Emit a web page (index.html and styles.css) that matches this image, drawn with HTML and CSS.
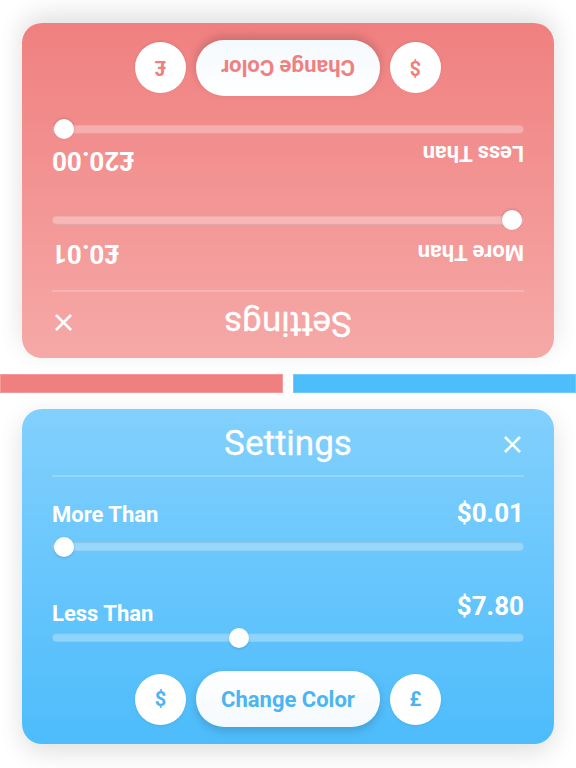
FILE: index.html
```html
<!DOCTYPE html>
<html lang="en">
<head>
<meta charset="utf-8">
<title>Settings</title>
<link rel="stylesheet" href="styles.css">
</head>
<body>
<div class="page">
  <section class="card card-red flipped">
    <div class="header">
      <span></span>
      <h1 class="title">Settings</h1>
      <button class="close" aria-label="Close">
        <svg viewBox="0 0 18 18" width="17" height="17"><path d="M2 2 L16 16 M16 2 L2 16" stroke="#fff" stroke-width="2.8" stroke-linecap="square" fill="none"/></svg>
      </button>
    </div>
    <div class="row row-first">
      <span class="label">More Than</span>
      <span class="value">£0.01</span>
    </div>
    <div class="slider slider-first"><div class="thumb" style="--p:0"></div></div>
    <div class="row row-second">
      <span class="label">Less Than</span>
      <span class="value">£20.00</span>
    </div>
    <div class="slider slider-second"><div class="thumb" style="--p:1"></div></div>
    <div class="actions">
      <button class="round">$</button>
      <button class="pill">Change Color</button>
      <button class="round">£</button>
    </div>
  </section>

  <div class="bars">
    <div class="bar bar-red"></div>
    <div class="bar bar-blue"></div>
  </div>

  <section class="card card-blue">
    <div class="header">
      <span></span>
      <h1 class="title">Settings</h1>
      <button class="close" aria-label="Close">
        <svg viewBox="0 0 18 18" width="17" height="17"><path d="M2 2 L16 16 M16 2 L2 16" stroke="#fff" stroke-width="2.8" stroke-linecap="square" fill="none"/></svg>
      </button>
    </div>
    <div class="row row-first">
      <span class="label">More Than</span>
      <span class="value">$0.01</span>
    </div>
    <div class="slider slider-first"><div class="thumb" style="--p:0"></div></div>
    <div class="row row-second">
      <span class="label">Less Than</span>
      <span class="value">$7.80</span>
    </div>
    <div class="slider slider-second"><div class="thumb" style="--p:0.39"></div></div>
    <div class="actions">
      <button class="round">$</button>
      <button class="pill">Change Color</button>
      <button class="round">£</button>
    </div>
  </section>
</div>
</body>
</html>
```

FILE: styles.css
```css
* { box-sizing: border-box; }

html, body {
  margin: 0;
  padding: 0;
  background: #ffffff;
}

body {
  font-family: Roboto, "Liberation Sans", sans-serif;
  color: #ffffff;
  width: 576px;
  height: 768px;
  overflow: hidden;
}

.page {
  display: flex;
  flex-direction: column;
  gap: 16px;
  padding: 23px 0 24px;
}

.card {
  margin: 0 22px;
  height: 335px;
  border-radius: 20px;
  padding: 0 30px;
  display: flex;
  flex-direction: column;
  box-shadow: 0 8px 26px rgba(0, 0, 0, 0.13);
}

.card-blue {
  --accent: #4ab5f2;
  background: linear-gradient(to bottom, #82d0fd, #4dbcfb);
}

.card-red {
  --accent: #f08080;
  background: linear-gradient(to bottom, #f5a9a7, #f08080);
}

.flipped {
  transform: rotate(180deg);
}

.header {
  display: grid;
  grid-template-columns: 1fr auto 1fr;
  align-items: center;
  padding: 15px 0 11px;
  border-bottom: 2px solid rgba(255, 255, 255, 0.22);
}

.title {
  margin: 0;
  font-size: 35px;
  line-height: 40px;
  font-weight: 400;
  -webkit-text-stroke: 0.3px #ffffff;
}

.close {
  justify-self: end;
  width: 24px;
  height: 24px;
  padding: 0;
  border: none;
  background: none;
  display: flex;
  align-items: center;
  justify-content: center;
}

.close svg { display: block; }

.row {
  display: flex;
  justify-content: space-between;
  align-items: flex-start;
}

.row-first { margin-top: 21px; }
.row-second { margin-top: 40px; }

.label {
  font-size: 22px;
  line-height: 20px;
  font-weight: 700;
}

.row-first .label { padding-top: 7px; }
.row-second .label { padding-top: 13px; }

.value {
  font-size: 26px;
  line-height: 30px;
  font-weight: 700;
}

.slider {
  position: relative;
  height: 9px;
  border-radius: 5px;
  background: rgba(255, 255, 255, 0.3);
  box-shadow: inset 0 0 0 1px rgba(0, 0, 0, 0.04), inset 0 1px 2px rgba(0, 0, 0, 0.06);
}

.slider-first { margin-top: 14px; }
.slider-second { margin-top: 9px; }

.thumb {
  position: absolute;
  top: 50%;
  left: calc(2px + var(--p) * (100% - 24px));
  width: 20px;
  height: 20px;
  margin-top: -10px;
  border-radius: 50%;
  background: #ffffff;
  box-shadow: 0 1px 3px rgba(0, 0, 0, 0.15);
}

.actions {
  margin-top: 29px;
  display: flex;
  justify-content: center;
  align-items: center;
  gap: 10px;
}

.actions button {
  font-family: Roboto, "Liberation Sans", sans-serif;
  border: none;
  color: var(--accent);
  font-weight: 700;
  padding: 0;
  cursor: pointer;
}

.round {
  width: 51px;
  height: 51px;
  border-radius: 50%;
  background: #ffffff;
  font-size: 20px;
  box-shadow: 0 1px 3px rgba(0, 0, 0, 0.08);
}

.pill {
  width: 184px;
  height: 56px;
  border-radius: 28px;
  background: linear-gradient(to bottom, #ffffff, #f3f9fd);
  font-size: 22px;
  box-shadow: 0 4px 10px rgba(0, 0, 0, 0.16);
}

.bars {
  display: flex;
  gap: 10px;
}

.bar {
  flex: 1;
  height: 19px;
}

.bar-red {
  background: #f08080;
  box-shadow: inset 0 0 0 1px rgba(255, 255, 255, 0.2);
}

.bar-blue {
  background: #4dbdfb;
  box-shadow: inset 0 0 0 1px rgba(255, 255, 255, 0.2);
}
```
